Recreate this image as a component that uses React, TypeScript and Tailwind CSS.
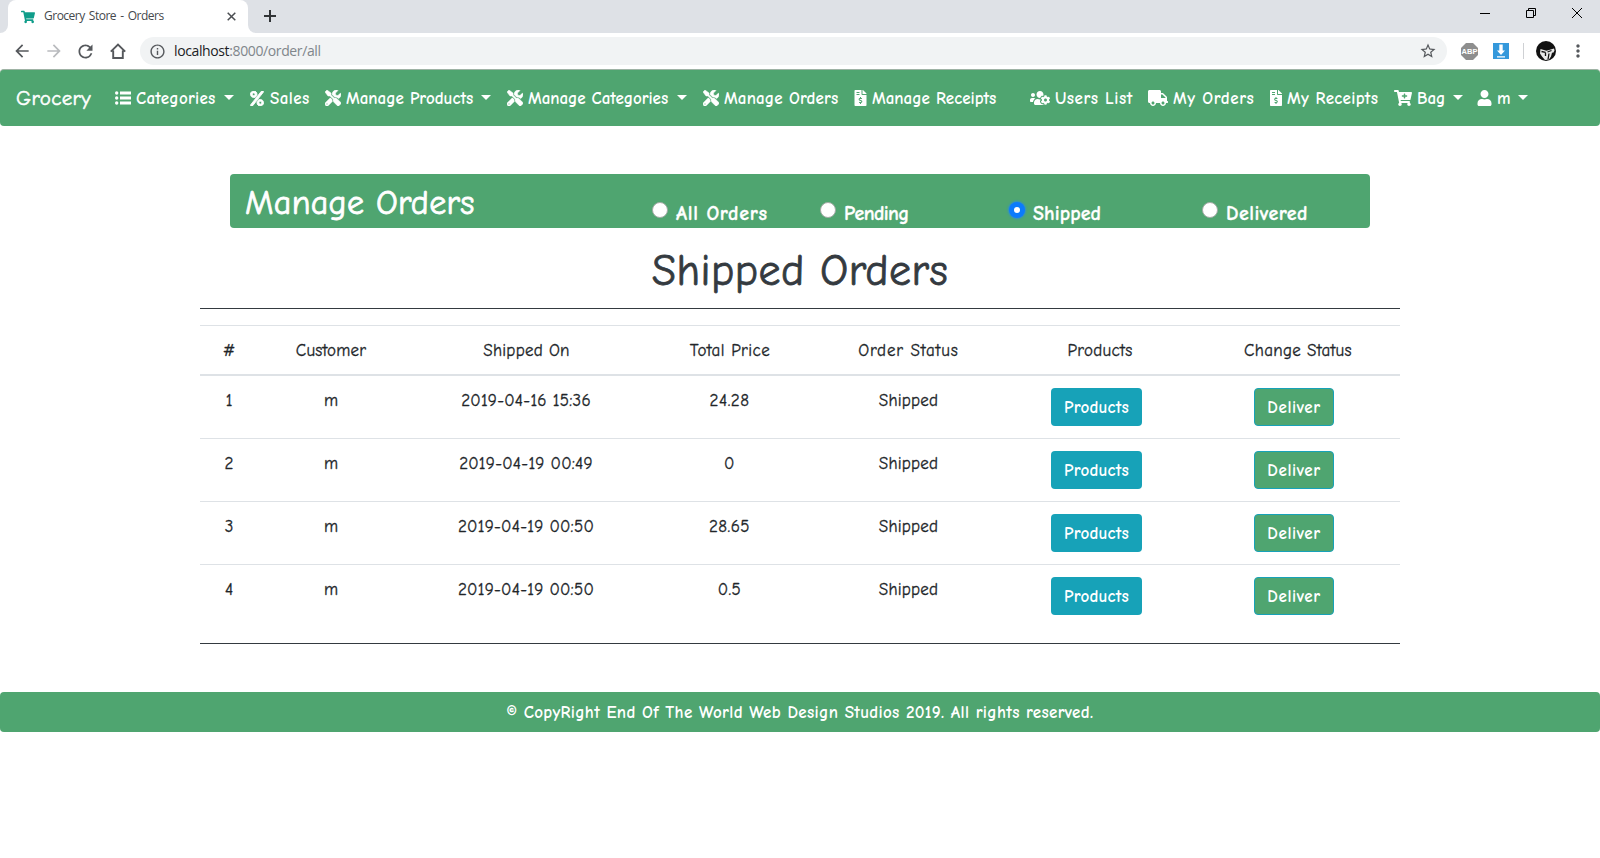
import React from "react";
import { FaPercent, FaTools, FaFileInvoiceDollar, FaUsersCog, FaTruck, FaCartPlus, FaUser, FaShoppingCart } from "react-icons/fa";
import { MdArrowBack, MdArrowForward, MdRefresh, MdInfoOutline, MdStarBorder, MdMoreVert } from "react-icons/md";

function Caret() {
  return <span className="-mt-px h-0 w-0 border-x-[5px] border-t-[5px] border-x-transparent border-t-white" />;
}

function ListIcon() {
  return (
    <svg width="16" height="16" viewBox="0 0 16 16" fill="currentColor">
      <path d="M5 1.500h11v3H5zM5 6.500h11v3H5zM5 11.500h11v3H5z" />
      <circle cx="1.700" cy="3" r="1.700" />
      <circle cx="1.700" cy="8" r="1.700" />
      <circle cx="1.700" cy="13" r="1.700" />
    </svg>
  );
}

type NavItem = {
  icon: React.ReactNode;
  label: string;
  item: string;
  slot: string;
  text: string;
  caret?: boolean;
};

const navItems: NavItem[] = [
  { icon: <ListIcon />, label: "Categories", item: "w-[135px]", slot: "w-[21px]", text: "w-[88px] tracking-[0.25px]", caret: true },
  { icon: <FaPercent className="h-[15px] w-[14px] stroke-white stroke-[30]" />, label: "Sales", item: "w-[75px]", slot: "w-[20px]", text: "tracking-[0.4px]" },
  { icon: <FaTools size={16} className="stroke-white stroke-[16]" />, label: "Manage Products", item: "w-[182px]", slot: "w-[21px]", text: "w-[135px]", caret: true },
  { icon: <FaTools size={16} className="stroke-white stroke-[16]" />, label: "Manage Categories", item: "w-[196px]", slot: "w-[21px]", text: "w-[149px] tracking-[-0.05px]", caret: true },
  { icon: <FaTools size={16} className="stroke-white stroke-[16]" />, label: "Manage Orders", item: "w-[151px]", slot: "w-[21px]", text: "tracking-[0.15px]" },
  { icon: <FaFileInvoiceDollar className="h-4 w-[13px]" />, label: "Manage Receipts", item: "w-[176px]", slot: "w-[18px]", text: "" },
  { icon: <FaUsersCog size={20} />, label: "Users List", item: "w-[118px]", slot: "w-[25px]", text: "tracking-[0.5px]" },
  { icon: <FaTruck size={20} />, label: "My Orders", item: "w-[122px]", slot: "w-[25px]", text: "tracking-[0.6px]" },
  { icon: <FaFileInvoiceDollar className="h-4 w-[12px]" />, label: "My Receipts", item: "w-[124px]", slot: "w-[17px]", text: "tracking-[0.3px]" },
  { icon: <FaCartPlus size={18} />, label: "Bag", item: "w-[83px]", slot: "w-[23px]", text: "w-[36px]", caret: true },
  { icon: <FaUser size={16} className="h-4 w-[15px]" />, label: "m", item: "w-[60px]", slot: "w-[20px]", text: "w-[21px]", caret: true },
];

const filters = [
  { label: "All Orders", cls: "w-[168px]", text: "tracking-[0.7px]", checked: false },
  { label: "Pending", cls: "w-[189px]", text: "tracking-[-0.6px]", checked: false },
  { label: "Shipped", cls: "w-[193px]", text: "tracking-[0.1px]", checked: true },
  { label: "Delivered", cls: "w-[168px]", text: "tracking-[0.5px]", checked: false },
];

const columns = [
  { label: "#", cls: "w-[58px]" },
  { label: "Customer", cls: "w-[146px] tracking-[0.2px]" },
  { label: "Shipped On", cls: "w-[244px] pl-px tracking-[0.25px]" },
  { label: "Total Price", cls: "w-[163px] pl-px tracking-[0.45px]" },
  { label: "Order Status", cls: "w-[194px] pl-px tracking-[0.85px]" },
  { label: "Products", cls: "w-[190px] tracking-[0.3px]" },
  { label: "Change Status", cls: "w-[205px] pl-px tracking-[0.3px]" },
];

const orders = [
  { id: 1, customer: "m", date: "2019-04-16 15:36", total: "24.28" },
  { id: 2, customer: "m", date: "2019-04-19 00:49", total: "0" },
  { id: 3, customer: "m", date: "2019-04-19 00:50", total: "28.65" },
  { id: 4, customer: "m", date: "2019-04-19 00:50", total: "0.5" },
];

function BrowserChrome() {
  return (
    <div className="font-['Open_Sans',sans-serif]">
      <div className="flex h-[33px] bg-[#dee1e6]">
        <div className="flex w-2 items-end bg-white">
          <div className="h-full w-full rounded-br-lg bg-[#dee1e6]" />
        </div>
        <div className="flex w-[240px] items-center rounded-t-lg bg-white pl-[13px] pr-[12px]">
          <FaShoppingCart size={14} className="text-[#0f9d8a]" />
          <span className="ml-[9px] flex-1 whitespace-nowrap pb-px text-[12px] tracking-[-0.5px] text-[#45494d] [word-spacing:1.500px]">Grocery Store - Orders</span>
          <svg width="9" height="9" viewBox="0 0 9 9" stroke="#4a4d51" strokeWidth="1.500">
            <path d="M0.700 0.700l7.600 7.600M8.300 0.700L0.700 8.300" />
          </svg>
        </div>
        <div className="w-2 bg-white">
          <div className="h-full w-full rounded-bl-lg bg-[#dee1e6]" />
        </div>
        <div className="flex items-center pb-px pl-2">
          <svg width="12" height="12" viewBox="0 0 12 12" stroke="#303336" strokeWidth="2">
            <path d="M6 0v12M0 6h12" />
          </svg>
        </div>
        <div className="ml-auto flex h-[26px] items-center gap-[36px] pr-[18px]">
          <svg width="10" height="10" viewBox="0 0 10 10" stroke="#000">
            <path d="M0 5.500h10" />
          </svg>
          <svg width="10" height="10" viewBox="0 0 10 10" stroke="#000" fill="none">
            <path d="M0.500 2.500h7v7h-7zM2.500 2.500v-2h7v7h-2" />
          </svg>
          <svg width="10" height="10" viewBox="0 0 10 10" stroke="#000">
            <path d="M0 0l10 10M10 0L0 10" />
          </svg>
        </div>
      </div>
      <div className="flex h-[36px] items-center bg-white pl-[12px] text-[#55585c]">
        <MdArrowBack size={20} />
        <MdArrowForward size={20} className="ml-3 text-[#b9bbbe]" />
        <MdRefresh size={21} className="ml-[11px]" />
        <svg className="ml-[14px]" width="16" height="16" viewBox="0 0 16 16" fill="none" stroke="currentColor" strokeWidth="1.900">
          <path d="M0.800 8.700L8 1.500l7.200 7.200M3.200 7.500V15h9.600V7.500" />
        </svg>
        <div className="ml-[14px] flex h-7 w-[1307px] items-center rounded-full bg-[#f1f3f4] pl-[9px] pr-[10px]">
          <MdInfoOutline size={17} />
          <span className="ml-[8px] flex-1 whitespace-nowrap pb-px text-[14px] tracking-[-0.38px] text-[#80868b]">
            <span className="text-[#202124]">localhost</span>:8000/order/all
          </span>
          <MdStarBorder size={18} />
        </div>
        <svg className="ml-[14px]" width="17" height="17" viewBox="0 0 17 17">
          <path d="M5 0h7l5 5v7l-5 5H5l-5-5V5z" fill="#8e8e8e" />
          <text x="8.500" y="11.300" fill="#fff" fontSize="7.500" fontWeight="700" textAnchor="middle" fontFamily="Liberation Sans, sans-serif">ABP</text>
        </svg>
        <svg className="ml-[15px]" width="16" height="16" viewBox="0 0 16 16">
          <path d="M0 0h16v16H0z" fill="#3498db" />
          <path d="M6.300 1.500h3.400v6H12L8 12 4 7.500h2.300zM4 13.300h8v1.200H4z" fill="#fff" />
        </svg>
        <div className="ml-[14px] h-4 w-px bg-[#cfd1d4]" />
        <svg className="ml-[12px]" width="20" height="20" viewBox="0 0 20 20">
          <circle cx="10" cy="10" r="10" fill="#111" />
          <path d="M4.500 8l6 1.800 7.500-2.300.5 2-1 2-1.500.3-1 3.700-2 3-4 .5-3-3.500-2-3z" fill="#e8e8e8" />
          <path d="M5.500 10.500l4 .8M11.500 11l4-1.500M9.500 11.500v3.500M13 12.500l-1 6" stroke="#111" strokeWidth="1.300" />
        </svg>
        <MdMoreVert size={20} className="ml-[12px]" />
      </div>
    </div>
  );
}

function Navbar() {
  return (
    <nav className="flex h-[57px] items-center rounded-[4px] border-t border-[#9fb3a5] bg-[#4fa570] pl-4 text-[17px] leading-6 text-white">
      <span className="w-[99px] text-[21px] tracking-[0.35px] [-webkit-text-stroke:0.5px]">Grocery</span>
      {navItems.map((n) => (
        <a key={n.label} className={`flex shrink-0 items-center whitespace-nowrap ${n.item}`}>
          <span className={`shrink-0 ${n.slot}`}>{n.icon}</span>
          <span className={`shrink-0 pt-[2px] font-bold ${n.text}`}>{n.label}</span>
          {n.caret && <Caret />}
        </a>
      ))}
    </nav>
  );
}

function Radio({ checked }: { checked: boolean }) {
  if (checked) {
    return (
      <span className="flex h-4 w-4 items-center justify-center rounded-full bg-[#0b7bfb] shadow-[0_0_2px_1px_#2f8fd0]">
        <span className="h-1.5 w-1.5 rounded-full bg-white" />
      </span>
    );
  }
  return <span className="h-4 w-4 rounded-full border border-[#a3aaa5] bg-white" />;
}

export default function App() {
  return (
    <div className="h-[858px] w-[1600px] overflow-hidden bg-white font-['Comic_Neue','Comic_Sans_MS',Lato,sans-serif] text-[#212529]">
      <BrowserChrome />
      <Navbar />
      <main className="mx-auto mt-[48px] w-[1200px]">
        <div className="mx-[30px] flex h-[54px] rounded-[4px] bg-[#4fa570] pl-[15px] text-white">
          <h2 className="w-[408px] pt-[8px] text-[34px] leading-[42px] tracking-[0.3px] [-webkit-text-stroke:0.8px]">Manage Orders</h2>
          {filters.map((f) => (
            <label key={f.label} className={`flex shrink-0 pt-[28px] ${f.cls}`}>
              <Radio checked={f.checked} />
              <span className={`ml-[8px] text-[20px] font-bold leading-[23px] [-webkit-text-stroke:0.3px] ${f.text}`}>{f.label}</span>
            </label>
          ))}
        </div>
        <h1 className="mt-[16px] h-[64px] text-center text-[44px] leading-[54px] tracking-[0.45px] text-[#343a40] [-webkit-text-stroke:0.8px]">Shipped Orders</h1>
        <div className="h-px bg-[#343a40]" />
        <table className="mt-4 w-[1200px] table-fixed border-separate border-spacing-0 text-center text-[17px] leading-6">
          <thead>
            <tr className="h-[51px]">
              {columns.map((c) => (
                <th key={c.label} className={`border-b-2 border-t border-[#dee2e6] py-0 pr-0 pt-[2px] font-normal [-webkit-text-stroke:0.3px] ${c.cls}`}>{c.label}</th>
              ))}
            </tr>
          </thead>
          <tbody className="align-top [-webkit-text-stroke:0.3px] [&>tr+tr>td]:border-t [&>tr+tr>td]:border-[#dee2e6]">
            {orders.map((o) => (
              <tr key={o.id} className="h-[63px] first:h-[62px]">
                <td className="pt-[13px]">{o.id}</td>
                <td className="pt-[13px]">{o.customer}</td>
                <td className="pt-[13px] tracking-[0.25px]">{o.date}</td>
                <td className="pt-[13px] tracking-[0.5px]">{o.total}</td>
                <td className="pl-px pt-[13px] tracking-[0.2px]">Shipped</td>
                <td className="pr-[7px] pt-[12px]">
                  <button className="block h-[38px] w-[91px] rounded-[4px] bg-[#17a2b8] pt-px font-bold tracking-[0.2px] text-white mx-auto [-webkit-text-stroke:0px]">Products</button>
                </td>
                <td className="pr-[7px] pt-[12px]">
                  <button className="block h-[38px] w-[80px] rounded-[4px] border border-[#17a2b8] bg-[#4fa570] pt-px font-bold tracking-[0.6px] text-white mx-auto [-webkit-text-stroke:0px]">Deliver</button>
                </td>
              </tr>
            ))}
          </tbody>
        </table>
        <div className="mt-[16px] h-px bg-[#343a40]" />
      </main>
      <footer className="mt-[48px] flex h-[40px] items-center justify-center rounded-[4px] bg-[#4fa570] pt-px text-[17px] font-bold tracking-[0.33px] text-white">
        © CopyRight End Of The World Web Design Studios 2019. All rights reserved.
      </footer>
    </div>
  );
}
